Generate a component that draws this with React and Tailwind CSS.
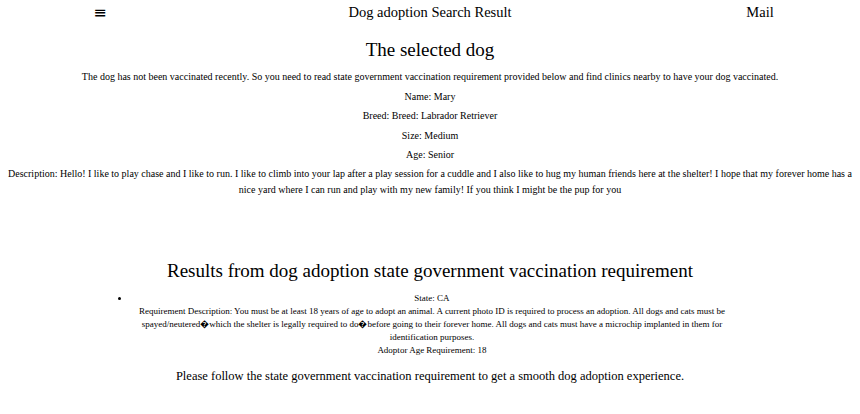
import React from "react";

const dog = {
  name: "Mary",
  breed: "Breed: Labrador Retriever",
  size: "Medium",
  age: "Senior",
  description:
    "Hello! I like to play chase and I like to run. I like to climb into your lap after a play session for a cuddle and I also like to hug my human friends here at the shelter! I hope that my forever home has a nice yard where I can run and play with my new family! If you think I might be the pup for you",
};

const requirements = [
  {
    state: "CA",
    description:
      "You must be at least 18 years of age to adopt an animal. A current photo ID is required to process an adoption. All dogs and cats must be spayed/neutered\uFFFDwhich the shelter is legally required to do\uFFFDbefore going to their forever home. All dogs and cats must have a microchip implanted in them for identification purposes.",
    age: 18,
  },
];

function App() {
  return (
    <div className="min-h-screen bg-white text-black font-['Liberation_Serif','Times_New_Roman',serif]">
      {/* HEADER */}
      <div className="grid grid-cols-[200px_1fr_200px] items-center h-[26px] text-center text-[14.5px]">
        <div className="text-[16px] font-['DejaVu_Sans',sans-serif]">≡</div>
        <div>Dog adoption Search Result</div>
        <div>Mail</div>
      </div>

      {/* SELECTED DOG */}
      <div className="text-center px-2">
        <h2 className="text-[19px] leading-[28px] mt-[10px] mb-[6px]">The selected dog</h2>
        <p className="text-[10px] leading-[13px] mb-[6.5px]">
          The dog has not been vaccinated recently. So you need to read state government vaccination requirement provided below and find clinics nearby to have your dog vaccinated.
        </p>
        <p className="text-[10px] leading-[13px] mb-[6.5px]">Name: {dog.name}</p>
        <p className="text-[10px] leading-[13px] mb-[6.5px]">Breed: {dog.breed}</p>
        <p className="text-[10px] leading-[13px] mb-[6.5px]">Size: {dog.size}</p>
        <p className="text-[10px] leading-[13px] mb-[5px]">Age: {dog.age}</p>
        <p className="text-[10px] leading-[16px]">Description: {dog.description}</p>
      </div>

      {/* REQUIREMENTS */}
      <div className="text-center mt-[60px]">
        <h2 className="text-[19px] leading-[26px] mb-[8px]">
          Results from dog adoption state government vaccination requirement
        </h2>
        <ul className="list-disc ml-[90px] mr-[126px] pl-10 text-[9px] leading-[13px]">
          {requirements.map((r) => (
            <li key={r.state}>
              <div>State: {r.state}</div>
              <div>Requirement Description: {r.description}</div>
              <div>Adoptor Age Requirement: {r.age}</div>
            </li>
          ))}
        </ul>
        <p className="text-[12.5px] leading-[18px] mt-[10px]">
          Please follow the state government vaccination requirement to get a smooth dog adoption experience.
        </p>
      </div>
    </div>
  );
}

export default App;
